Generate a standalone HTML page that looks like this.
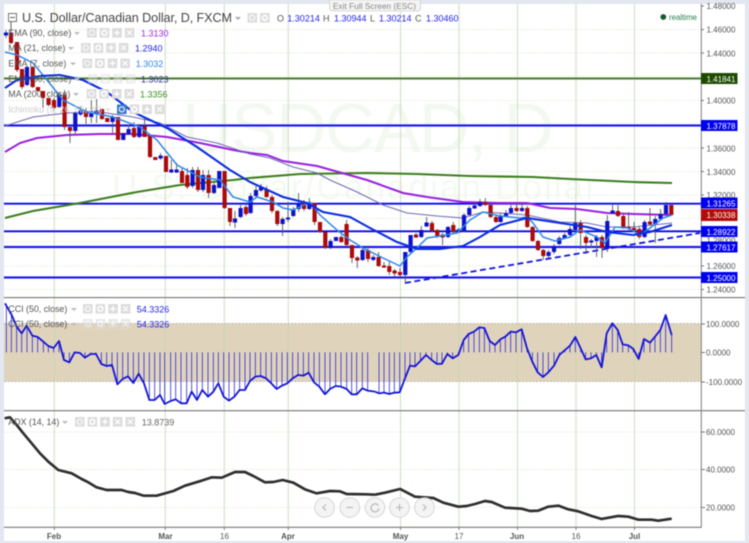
<!DOCTYPE html>
<html><head><meta charset="utf-8"><style>
html,body{margin:0;padding:0;background:#e3e7ef;width:749px;height:543px;overflow:hidden}
svg{display:block;filter:blur(.4px)}
text{font-family:"Liberation Sans",sans-serif;font-size:8.9px;fill:#555}
.ax{font-size:8px;fill:#555}
.tg{font-size:8px;fill:#fff}
.b{font-weight:bold}
</style></head><body>
<svg width="749" height="543" viewBox="0 0 749 543" xmlns="http://www.w3.org/2000/svg">
<defs>
<g id="btn"><rect width="9.6" height="9.6" fill="#dcdcdc"/><circle cx="4.8" cy="4.8" r="2.6" fill="none" stroke="#fff" stroke-width="1"/></g>
<g id="btg"><rect width="9.6" height="9.6" fill="#dcdcdc"/><circle cx="4.8" cy="4.8" r="2.4" fill="none" stroke="#fff" stroke-width="1.6"/></g>
<g id="btp"><rect width="9.6" height="9.6" fill="#dcdcdc"/><path d="M4.8 2V7.6M2 4.8H7.6" stroke="#fff" stroke-width="1.4"/></g>
<g id="btx"><rect width="9.6" height="9.6" fill="#dcdcdc"/><path d="M2.4 2.4L7.2 7.2M7.2 2.4L2.4 7.2" stroke="#fff" stroke-width="1.2"/></g>
<g id="row"><use href="#btn"/><use href="#btg" x="12.6"/><use href="#btp" x="25.2"/><use href="#btx" x="37.8"/></g>
</defs>
<rect x="4" y="4" width="741" height="537" fill="#fff"/>

<!-- watermark -->
<text x="182" y="152" style="font-size:70px;fill:#f3f9f1" textLength="372">USDCAD, D</text>
<text x="112" y="199" style="font-size:35px;fill:#f4faf2" textLength="485">U.S. Dollar/Canadian Dollar</text>

<!-- CCI band -->
<rect x="4" y="323.5" width="697" height="58" fill="#e0d3bc"/>
<path d="M4 323.5H701M4 381.5H701" stroke="#aaa" stroke-width=".8" stroke-dasharray="2 1.5"/>
<path d="M4 352.5H701" stroke="#d8ceb0" stroke-width=".6" stroke-dasharray="1 1"/>

<!-- gridlines -->
<path d="M4 29.5H701M4 53H701M4 77H701M4 100.5H701M4 124H701M4 148H701M4 171.5H701M4 195H701M4 218.5H701M4 242H701M4 266H701M4 289.5H701M4 432H701M4 469.5H701M4 507.5H701" stroke="#e6eddc" stroke-width="1" stroke-dasharray="1.5 1.5"/>
<path d="M54.3 4V527M165.3 4V527M288.3 4V527M400.5 4V527M517.5 4V527M634.5 4V527" stroke="#bcd6ae" stroke-width="1" opacity=".75"/>
<path d="M224.3 4V527M459 4V527M576 4V527" stroke="#bcd6ae" stroke-width="1.6" opacity=".5"/>

<!-- horizontal levels -->
<path d="M4 78.5H701" stroke="#93b880" stroke-width="2.4"/><path d="M4 78.5H701" stroke="#2b5f12" stroke-width="1"/>
<path d="M4 125.5H701M4 203.7H701M4 231.3H701M4 247H701M4 277.5H701" stroke="#8a8aff" stroke-width="2.4"/>
<path d="M4 125.5H701M4 203.7H701M4 231.3H701M4 247H701M4 277.5H701" stroke="#0000e6" stroke-width="1.4"/>

<!-- dashed trendline -->
<path d="M405 283L700 233" stroke="#1212e0" stroke-width="1.8" stroke-dasharray="6 3.5" fill="none"/>

<!-- MA lines -->
<polyline fill="none" stroke="#3c7d1e" stroke-width="2.1" points="5,218 33,211 80,203 137,192 180,185 233,180 250,178 300,174 367,173 417,174 470,176 533,177 570,179 633,182 672,183"/>
<polyline fill="none" stroke="#9a1fe0" stroke-width="2" points="5,152 20,143 37,138 67,135 100,134 133,134 167,137 200,143 233,150 250,153 267,155 283,161 317,166 367,180 403,193 427,197 463,202 500,203 527,203 550,208 577,209 607,213 633,214 670,215"/>
<polyline fill="none" stroke="#6f68b4" stroke-width="1" points="5,126 33,117 67,113 100,112 133,117 160,123 187,137 217,143 250,154 270,158 293,167 317,173 330,180 357,192 383,205 407,213 437,216 463,218 483,212 500,213 527,215 560,222 587,223 607,227 633,227 672,223"/>

<!-- candle wicks -->
<path stroke="#555" stroke-width=".9" fill="none" d="M6 30V38M11 20V44M17 42V72M22 69V89M27 66V86M32.7 66V88M43 91V108M48.6 98V106M54 98V110M59.3 92V108M64.6 90V130M70 127V143M75.3 111V135M80.6 106V116M86 108V124M91.3 100V123M96.6 99V123M102 109V120M112.6 115V133M118 117V140M128.6 125V135M134 122V138M139.3 124V138M144.6 118V137M150 136V158M160.6 153V160M171.3 160V173M176.6 163V173M182 168V183M187.3 168V189M192.6 167V188M198 167V192M203 170V192M208.6 170V198M214 183V194M224.6 171V209M230 208V226M235 211V228M240.6 205V218M246 205V216M250.6 193V214M256 186V197M261 184V192M266.6 186V198M272 195V213M277.3 210V226M282.6 217V236M288 202V222M293.3 207V217M298.6 193V212M304 200V211M309.3 198V210M314.6 203V225M320 222V233M325.3 232V249M330.6 239V249M341.3 235V243M346.6 220V246M352 245V263M357.3 256V268M362.6 248V261M368 247V262M373.3 255V261M378.6 252V267M384 262V268M389.3 262V275M394.6 269V277M400 268V277M405.3 252V284M410.6 235V253M416 233V238M421.3 226V238M426.6 217V227M432 221V232M437.3 229V238M442.6 233V245M448 226V238M453.3 222V233M458.6 228V233M464 213V232M469.3 206V216M474.6 204V209M480 199V207M485.3 198V206M490.6 203V218M496 215V223M500.6 213V223M506 210V217M511 205V214M516.6 204V212M522 202V212M527.3 206V228M532.6 226V242M538 240V251M543.3 249V260M548.6 250V258M554 244V254M559.3 236V245M564.6 233V239M570 226V236M575.3 205V231M580.6 220V249M586 235V254M591.3 239V248M596.6 235V257M602 235V258M607.3 215V252M612.6 205V214M618 205V217M623.3 214V229M628.6 212V230M634 222V232M639.3 227V239M644.6 220V238M650 208V225M655.3 216V243M660.6 209V220M666 202V214M671.3 205V216"/>
<!-- red bodies -->
<path stroke="#aa0a0a" stroke-width="4.2" fill="none" d="M11 33V43M17 42V70M22 69V87M32.7 67V87M38 87V91M43 91V98M48.6 98V105M54 100V108M64.6 95V127M70 127V131M86 111V117M102 109V119M107.3 118V122M118 117V140M134 128V137M144.6 126V137M150 136V157M155.3 157V160M166 156V172M182 171V183M187.3 175V187M198 170V190M208.6 175V193M224.6 171V208M230 208V222M246 207V214M266.6 189V197M272 197V211M277.3 211V224M304 203V209M314.6 203V222M320 222V232M325.3 232V248M341.3 237V242M346.6 224V245M352 245V258M357.3 257.5V260.5M368 250V259M378.6 257V266M384 265.5V267.5M389.3 266V272M394.6 270.5V273.5M400 272V275M416 234.5V237.5M432 223V231M437.3 230V237M442.6 234.5V237.5M453.3 225V232M485.3 202V205M490.6 205V217M496 217V222M516.6 208V211M527.3 208V227M532.6 227V241M538 241V250M543.3 250V256M580.6 223V233M586 237V243M602 237V248M618 211V216M623.3 216V227M628.6 226.5V228.5M634 228V230M639.3 229V237M650 221.5V224.5M671.3 205V215"/>
<!-- blue bodies -->
<path stroke="#0c12cc" stroke-width="4.2" fill="none" d="M6 32.5V35.5M27 67V85M59.3 95V107M75.3 113V131M80.6 110.5V114.5M91.3 111V117M96.6 110.5V113.5M112.6 117V122M123.3 133V140M128.6 129V134M139.3 126V137M160.6 155.5V158.5M171.3 169.5V172.5M176.6 169.5V172.5M192.6 170V186M203 175V190M214 185V193M219.3 171V188M235 218.5V222.5M240.6 208V217M250.6 196V213M256 190V196M261 187.5V190.5M282.6 219V224M288 217.5V219.5M293.3 209V216M298.6 203V209M309.3 203V209M330.6 241V248M336 237V241M362.6 250V260M373.3 257V260M405.3 252V275M410.6 235V252M421.3 230V237M426.6 222.5V226.5M448 227V237M458.6 229.5V232.5M464 215V231M469.3 208V215M474.6 205.5V208.5M480 202V206M500.6 216V222M506 213V216M511 208V213M522 208V211M548.6 252V256M554 246V252M559.3 238V244M564.6 235V238M570 229V235M575.3 223V230M591.3 240.5V242.5M596.6 237V241M607.3 221V249M612.6 210.5V213.5M644.6 222V237M655.3 219V224M660.6 214V219M666 205V214"/>

<polyline fill="none" stroke="#2f86e6" stroke-width="1.5" points="5,52 17,55 33,63 47,80 63,100 87,112 113,117 140,127 157,140 177,165 200,177 220,180 233,197 250,202 257,197 273,202 283,208 293,210 310,202 320,215 337,230 350,240 363,248 383,258 400,266 407,257 417,248 427,238 440,236 457,233 470,220 483,212 500,216 520,218 527,217 533,223 543,237 555,241 570,237 580,230 597,237 605,243 615,227 628,228 640,235 650,228 663,218 672,215"/>
<polyline fill="none" stroke="#0a2ce0" stroke-width="2.1" points="5,88 17,80 40,76 60,75 83,80 107,92 133,112 167,128 197,147 230,170 250,182 283,197 307,203 323,212 350,217 370,228 397,242 417,249 440,249 463,246 480,237 500,225 527,218 560,223 587,227 607,232 633,235 650,232 672,225"/>

<!-- CCI stems and line -->
<g transform="translate(0,295) scale(.33333)" fill="none">
<path stroke="#1a1ad8" stroke-width="2.2" d="M19 30V172M34 55V172M50 95V172M65 115V172M81 92V172M97 122V172M113 126V172M130 140V172M145 153V172M161 159V172M177 138V172M192 172V195M208 172V202M224 172V172M240 172V174M255 172V188M272 172V177M288 172V177M304 172V207M320 172V213M336 172V210M352 172V268M368 172V252M384 172V244M400 172V264M416 172V236M432 172V265M448 172V315M464 172V315M480 172V300M494 172V327M512 172V318M527 172V313M543 172V325M560 172V325M575 172V290M591 172V315M607 172V285M624 172V305M640 172V290M655 172V265M671 172V305M687 172V317M703 172V305M719 172V285M735 172V285M750 172V258M766 172V245M782 172V243M798 172V250M814 172V265M830 172V282M846 172V272M862 172V265M878 172V250M894 172V240M910 172V242M926 172V233M942 172V262M958 172V275M975 172V298M990 172V282M1007 172V273M1023 172V275M1040 172V282M1055 172V298M1070 172V298M1087 172V280M1103 172V287"/>
<polyline stroke="#1414d8" stroke-width="5.4" stroke-linejoin="round" points="15,25 35,60 50,95 65,115 80,92 97,122 113,126 130,140 145,153 161,159 177,138 192,195 208,202 224,172 240,174 255,188 272,177 288,177 304,207 320,213 336,210 352,268 368,252 384,244 400,264 416,236 432,265 448,315 464,315 480,300 494,327 512,318 527,313 543,325 560,325 575,290 591,315 607,285 624,305 640,290 655,265 671,305 687,317 703,305 719,285 735,285 750,258 766,245 782,243 798,250 814,265 830,282 846,272 862,265 878,250 894,240 910,242 926,233 942,262 958,275 975,298 990,282 1007,273 1023,275 1040,282 1055,298 1070,298 1087,280 1103,287 1125,290"/>
</g>
<g transform="translate(375,295) scale(.33333)" fill="none">
<path stroke="#1a1ad8" stroke-width="2.2" d="M12 172V295M27 172V293M43 172V297M58 172V293M74 172V292M90 172V250M105 172V212M120 172V214M136 172V198M153 172V180M170 172V195M186 172V207M201 172V206M217 172V177M233 172V190M250 172V180M266 172V135M281 172V117M297 172V110M313 172V97M328 172V99M344 172V138M360 172V150M376 172V133M391 172V125M407 172V110M423 172V112M440 172V103M456 172V160M472 172V200M488 172V232M504 172V246M520 172V232M537 172V212M553 172V180M570 172V165M585 172V152M601 172V126M617 172V160M632 172V193M648 172V190M664 172V180M680 172V217M695 172V115M712 172V85M728 172V105M743 172V148M760 172V151M775 172V162M791 172V192M807 172V132M825 172V143M840 172V125M856 172V105M872 172V60M890 172V120"/>
<polyline stroke="#1414d8" stroke-width="5.4" stroke-linejoin="round" points="0,290 12,295 27,293 43,297 58,293 74,292 90,250 105,212 120,214 136,198 153,180 170,195 186,207 201,206 217,177 233,190 250,180 266,135 281,117 297,110 313,97 328,99 344,138 360,150 376,133 391,125 407,110 423,112 440,103 456,160 472,200 488,232 504,246 520,232 537,212 553,180 570,165 585,152 601,126 617,160 632,193 648,190 664,180 680,217 695,115 712,85 728,105 743,148 760,151 775,162 791,192 807,132 825,143 840,125 856,105 872,60 890,120"/>
</g>

<!-- ADX -->
<g transform="translate(0,410) scale(.33333)" fill="none"><polyline stroke="#2e2e2e" stroke-width="8" stroke-linejoin="round" points="14,25 30,22 50,45 70,70 95,100 120,130 145,155 175,180 215,190 245,207 265,217 290,232 320,240 365,240 385,246 405,249 430,257 470,257 520,243 555,227 605,212 635,202 665,203 705,186 735,186 760,198 795,217 820,216 848,210 880,218 915,238 950,250 990,243 1020,244 1040,252 1100,253 1125,254"/></g>
<g transform="translate(375,410) scale(.33333)" fill="none"><polyline stroke="#2e2e2e" stroke-width="8" stroke-linejoin="round" points="0,254 30,248 75,237 120,260 175,264 205,278 250,290 275,288 300,282 330,273 350,276 390,293 440,296 465,303 490,302 520,290 550,287 580,298 610,304 650,318 680,327 730,318 760,320 790,329 830,329 850,332 890,326"/></g>

<!-- nav buttons -->
<g fill="#f2f2f2" fill-opacity=".85" stroke="#d6d6d6">
<circle cx="324.5" cy="507.5" r="9.8"/><circle cx="349.8" cy="507.5" r="9.8"/><circle cx="375" cy="507.5" r="9.8"/><circle cx="399.5" cy="507.5" r="9.8"/><circle cx="424.5" cy="507.5" r="9.8"/>
</g>
<g fill="none" stroke="#b4b4b4" stroke-width="1.1">
<path d="M326 504.5L323 507.5L326 510.5"/><path d="M346.5 507.5H353"/><path d="M378.3 505.5A4 4 0 1 0 379 508.5"/><path d="M399.5 504V511M396 507.5H403"/><path d="M423 504.5L426 507.5L423 510.5"/>
</g>

<!-- frame lines -->
<path d="M4 297.6H745M4 410.7H745" stroke="#777" stroke-width="1.1"/>
<path d="M4 527.3H701.5" stroke="#777" stroke-width="1.1"/>
<path d="M701.3 4V527.8" stroke="#888" stroke-width="1.1"/>
<path d="M701 6H704M701 29.5H704M701 53H704M701 100.5H704M701 148H704M701 171.5H704M701 195H704M701 266H704M701 289.5H704M701 324H705M701 352.5H705M701 382H705M701 432H705M701 469.5H705M701 507.5H705M54.3 527V530M165.3 527V530M224.3 527V530M288.3 527V530M400.5 527V530M459 527V530M517.5 527V530M576 527V530M634.5 527V530" stroke="#777" stroke-width=".9"/>

<!-- y axis labels -->
<g>
<text class="ax" x="706.5" y="9">1.48000</text>
<text class="ax" x="706.5" y="32.5">1.46000</text>
<text class="ax" x="706.5" y="56.5">1.44000</text>
<text class="ax" x="706.5" y="103.7">1.40000</text>
<text class="ax" x="706.5" y="151.3">1.36000</text>
<text class="ax" x="706.5" y="174.8">1.34000</text>
<text class="ax" x="706.5" y="198">1.32000</text>
<text class="ax" x="706.5" y="243.5">1.28000</text>
<text class="ax" x="706.5" y="269">1.26000</text>
<text class="ax" x="706.5" y="292.5">1.24000</text>
<text class="ax" x="706" y="327">100.0000</text>
<text class="ax" x="706" y="355.5">0.0000</text>
<text class="ax" x="706" y="385">-100.0000</text>
<text class="ax" x="706" y="435">60.0000</text>
<text class="ax" x="706" y="472.7">40.0000</text>
<text class="ax" x="706" y="510.7">20.0000</text>
</g>

<!-- tags -->
<rect x="701" y="73" width="36.5" height="11" fill="#1c4a00"/><text class="tg" x="706.5" y="82">1.41841</text>
<rect x="701" y="120" width="36.5" height="11" fill="#0000f0"/><text class="tg" x="706.5" y="129">1.37878</text>
<rect x="701" y="197.5" width="36.5" height="11" fill="#0000f0"/><text class="tg" x="706.5" y="206.5">1.31265</text>
<rect x="701" y="209" width="36.5" height="12" fill="#b40a0a"/><text class="tg" x="706.5" y="218">1.30338</text>
<rect x="701" y="226" width="36.5" height="11" fill="#0000f0"/><text class="tg" x="706.5" y="235">1.28922</text>
<rect x="701" y="241.5" width="36.5" height="11" fill="#0000f0"/><text class="tg" x="706.5" y="250.5">1.27617</text>
<rect x="701" y="272" width="36.5" height="11" fill="#0000f0"/><text class="tg" x="706.5" y="281">1.25000</text>

<!-- x axis labels -->
<text class="ax b" x="54" y="539" text-anchor="middle">Feb</text>
<text class="ax b" x="165.5" y="539" text-anchor="middle">Mar</text>
<text class="ax" x="224.5" y="539" text-anchor="middle">16</text>
<text class="ax b" x="288" y="539" text-anchor="middle">Apr</text>
<text class="ax b" x="400.5" y="539" text-anchor="middle">May</text>
<text class="ax" x="459" y="539" text-anchor="middle">17</text>
<text class="ax b" x="517" y="539" text-anchor="middle">Jun</text>
<text class="ax" x="576" y="539" text-anchor="middle">16</text>
<text class="ax b" x="634.5" y="539" text-anchor="middle">Jul</text>

<!-- title -->
<rect x="8.5" y="13.5" width="8" height="8" fill="#fff" stroke="#666" stroke-width=".9"/><path d="M10 17.5H15" stroke="#666"/>
<text x="22" y="22" style="font-size:12.6px;fill:#444" textLength="210">U.S. Dollar/Canadian Dollar, D, FXCM</text>
<path d="M235 17L241 17L238 20Z" fill="#aaa"/>
<use href="#btn" x="247.5" y="13"/><use href="#btg" x="260" y="13"/>
<text x="277" y="21.3" style="font-size:9px;fill:#555">O</text><text x="287.3" y="21.3" style="font-size:9px;fill:#2222ee">1.30214</text>
<text x="323" y="21.3" style="font-size:9px;fill:#555">H</text><text x="334" y="21.3" style="font-size:9px;fill:#2222ee">1.30944</text>
<text x="370" y="21.3" style="font-size:9px;fill:#555">L</text><text x="379" y="21.3" style="font-size:9px;fill:#2222ee">1.30214</text>
<text x="415" y="21.3" style="font-size:9px;fill:#555">C</text><text x="426" y="21.3" style="font-size:9px;fill:#2222ee">1.30460</text>

<!-- fullscreen tip -->
<path d="M329.5 0V8Q329.5 11 332.5 11H417.5Q420.5 11 420.5 8V0Z" fill="#f4f4f4" stroke="#d0d0d0" stroke-width=".8"/>
<text x="333" y="9" style="font-size:8.2px;fill:#888" textLength="83">Exit Full Screen (ESC)</text>

<!-- realtime -->
<circle cx="663.3" cy="17" r="2.9" fill="#14592f"/>
<text x="669" y="20" style="font-size:8px;fill:#2f8055" textLength="28">realtime</text>

<!-- legend -->
<text x="8.3" y="36" textLength="63">EMA (90, close)</text><path d="M74 32L80 32L77 35Z" fill="#bbb"/><use href="#row" x="87" y="28"/><text x="141" y="36.5" style="font-size:9px;fill:#a426f0">1.3130</text>
<text x="8.3" y="51" textLength="57">MA (21, close)</text><path d="M68 47L74 47L71 50Z" fill="#bbb"/><use href="#row" x="81" y="43"/><text x="135" y="51.5" style="font-size:9px;fill:#2020e0">1.2940</text>
<text x="8.3" y="66.5" textLength="58">EMA (7, close)</text><path d="M70 62.5L76 62.5L73 65.5Z" fill="#bbb"/><use href="#row" x="82.5" y="58.5"/><text x="135.7" y="67" style="font-size:9px;fill:#2f86e6">1.3032</text>
<text x="8.3" y="82" textLength="63">EMA (50, close)</text><path d="M74 78L80 78L77 81Z" fill="#bbb"/><use href="#row" x="88" y="74" opacity=".45"/><text x="141" y="82.5" style="font-size:9px;fill:#30308c">1.3023</text>
<text x="8.3" y="97" textLength="62">MA (200, close)</text><path d="M73 93L79 93L76 96Z" fill="#bbb"/><use href="#row" x="86.7" y="89"/><text x="140" y="97.5" style="font-size:9px;fill:#3f8e25">1.3356</text>
<text x="8.3" y="112.5" style="font-size:8.9px;fill:#ccc" textLength="94">Ichimoku (9, 26, 52, 26)</text><path d="M105 108.5L111 108.5L108 111.5Z" fill="#ddd"/>
<rect x="117" y="104.5" width="9.6" height="9.6" fill="#3a78c8"/><circle cx="121.8" cy="109.3" r="2.6" fill="none" stroke="#fff"/>
<use href="#btg" x="129.6" y="104.5"/><use href="#btp" x="142.2" y="104.5"/><use href="#btx" x="154.8" y="104.5"/>

<text x="8.3" y="312" textLength="59">CCI (50, close)</text><path d="M71 308L77 308L74 311Z" fill="#bbb"/><use href="#row" x="83" y="304"/><text x="136.7" y="312.3" style="font-size:9px;fill:#2222ee">54.3326</text>
<text x="8.3" y="327" textLength="59">CCI (50, close)</text><path d="M71 323L77 323L74 326Z" fill="#bbb"/><use href="#row" x="83" y="319" opacity=".6"/><text x="136.7" y="327.3" style="font-size:9px;fill:#2222ee">54.3326</text>

<text x="8.3" y="425" textLength="51">ADX (14, 14)</text><path d="M62 421L68 421L65 424Z" fill="#bbb"/><use href="#row" x="75" y="417"/><use href="#btx" x="125.5" y="417"/><text x="141.7" y="425.3" style="font-size:9px;fill:#666">13.8739</text>
</svg>
</body></html>
